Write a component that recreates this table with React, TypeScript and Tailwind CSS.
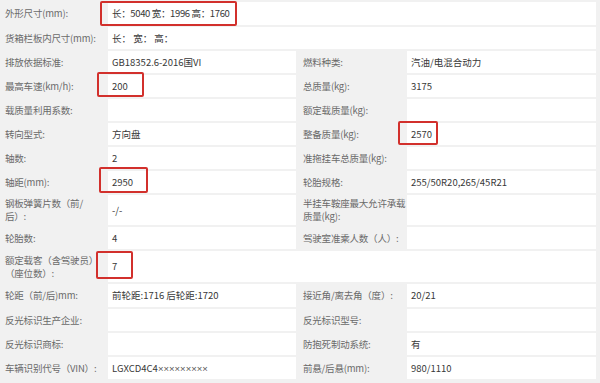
import React from 'react';

type Row = {
  l1: React.ReactNode;
  v1?: React.ReactNode;
  l2?: React.ReactNode;
  v2?: React.ReactNode;
  span?: boolean; // value 1 runs to the right edge
};

const rows: Row[] = [
  { l1: '外形尺寸(mm):', v1: <span className="tracking-[-0.35px]">长：5040 宽：1996 高：1760</span>, span: true },
  { l1: '货箱栏板内尺寸(mm):', v1: '长： 宽： 高：', span: true },
  { l1: '排放依据标准:', v1: 'GB18352.6-2016国VI', l2: '燃料种类:', v2: '汽油/电混合动力' },
  { l1: '最高车速(km/h):', v1: '200', l2: '总质量(kg):', v2: '3175' },
  { l1: '载质量利用系数:', v1: '', l2: '额定载质量(kg):', v2: '' },
  { l1: '转向型式:', v1: '方向盘', l2: '整备质量(kg):', v2: '2570' },
  { l1: '轴数:', v1: '2', l2: '准拖挂车总质量(kg):', v2: '' },
  { l1: '轴距(mm):', v1: '2950', l2: '轮胎规格:', v2: '255/50R20,265/45R21' },
  {
    l1: (<span>钢板弹簧片数（前/<br />后）:</span>),
    v1: '-/-',
    l2: (<span>半挂车鞍座最大允许承载<br />质量(kg):</span>),
    v2: '',
  },
  { l1: '轮胎数:', v1: '4', l2: '驾驶室准乘人数（人）:', v2: '' },
  { l1: (<span>额定载客（含驾驶员）<br />（座位数）:</span>), v1: '7', span: true },
  { l1: '轮距（前/后)mm:', v1: '前轮距:1716 后轮距:1720', l2: '接近角/离去角（度）:', v2: '20/21' },
  { l1: '反光标识生产企业:', v1: '', l2: '反光标识型号:', v2: '' },
  { l1: '反光标识商标:', v1: '', l2: '防抱死制动系统:', v2: '有' },
  {
    l1: '车辆识别代号（VIN）:',
    v1: (
      <span>
        LGXCD4C4
        <span className="text-[#555]" style={{ fontFamily: '"Liberation Sans", sans-serif' }}>×××××××××</span>
      </span>
    ),
    l2: '前悬/后悬(mm):',
    v2: '980/1110',
  },
];

const marks = [
  'left-[100px] top-[1px] w-[137px] h-[25px]',
  'left-[97px] top-[72px] w-[47px] h-[25px]',
  'left-[398px] top-[121px] w-[40px] h-[24px]',
  'left-[99px] top-[167px] w-[49px] h-[26px]',
  'left-[96px] top-[251px] w-[37px] h-[28px]',
];

export default function App() {
  return (
    <div
      className="relative w-[600px] h-[383px] overflow-hidden bg-[#f1f1f1] text-[9.5px] leading-[13px] whitespace-nowrap"
      style={{ fontFamily: '"Noto Sans CJK SC", "Noto Sans", sans-serif' }}
    >
      <div className="grid grid-cols-[108px_188px_111px_189px] grid-rows-[23px_22px_22px_22px_22px_22px_22px_22px_30px_22px_31px_23px_22px_22px_22px] gap-y-[2px] pt-[2px]">
        {rows.map((r, i) => (
          <React.Fragment key={i}>
            <div className="flex items-center pl-[5px] text-[#6a6a6a] tracking-[-0.2px]">{r.l1}</div>
            {r.span ? (
              <div className="col-span-3 flex items-center bg-white pl-[4px] text-[#383838] whitespace-pre">{r.v1}</div>
            ) : (
              <>
                <div className="flex items-center bg-white pl-[4px] text-[#383838]">{r.v1}</div>
                <div className="flex items-center pl-[7px] text-[#6a6a6a] tracking-[-0.2px]">{r.l2}</div>
                <div className="flex items-center bg-white pl-[4px] text-[#383838]">{r.v2}</div>
              </>
            )}
          </React.Fragment>
        ))}
      </div>

      {/* red highlight boxes drawn over the table */}
      {marks.map((m, i) => (
        <div key={i} className={`absolute ${m} border-2 border-[#d2302c] rounded-[2px]`} />
      ))}
    </div>
  );
}
